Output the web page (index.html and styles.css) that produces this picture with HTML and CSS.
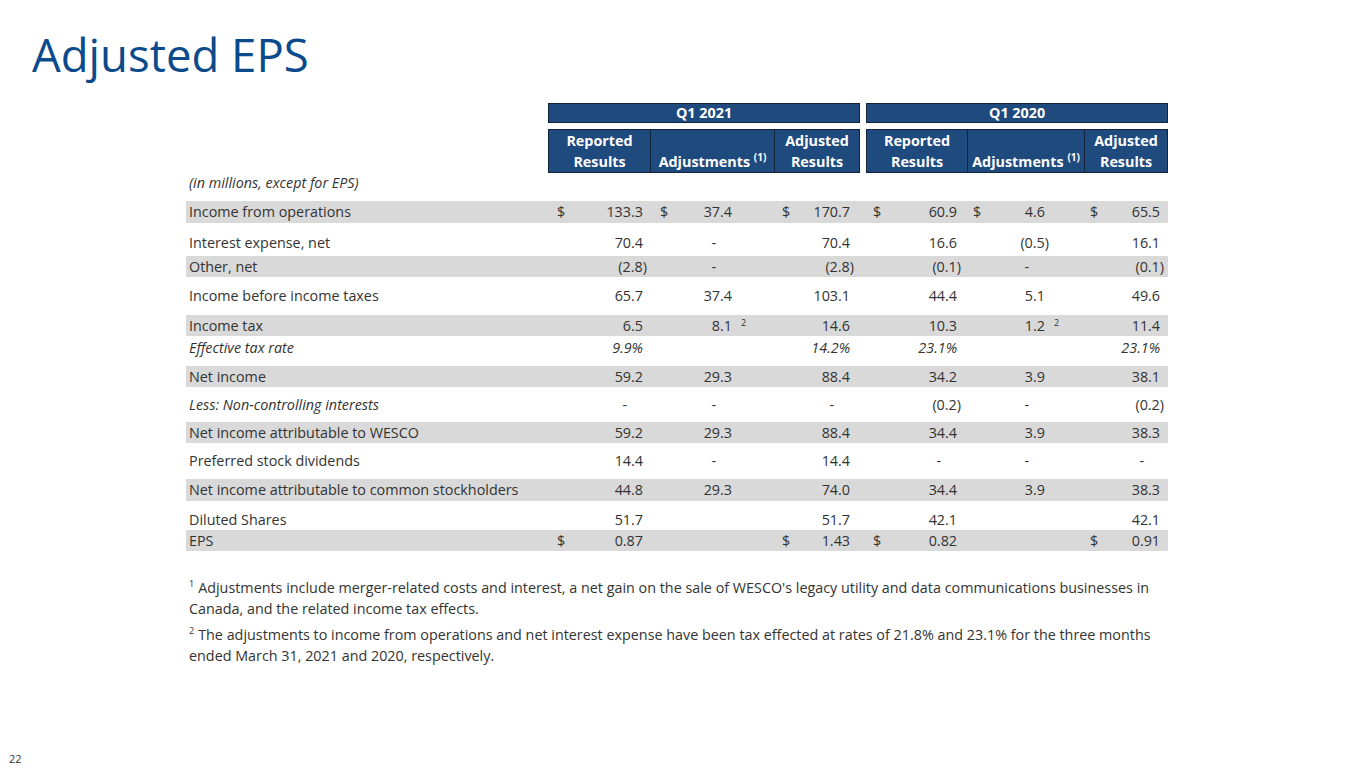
FILE: index.html
```html
<!DOCTYPE html>
<html lang="en">
<head>
<meta charset="utf-8">
<title>Adjusted EPS</title>
<link rel="stylesheet" href="styles.css">
</head>
<body>
<div class="slide">
  <h1 class="title">Adjusted EPS</h1>
  <div class="content">
    <table class="fin">
      <colgroup>
        <col class="w-label"><col class="w-c1"><col class="w-c2v"><col class="w-c2n"><col class="w-c3"><col class="w-gap"><col class="w-c4"><col class="w-c5v"><col class="w-c5n"><col class="w-c6">
      </colgroup>
      <thead>
        <tr class="period">
          <th></th>
          <th colspan="4" class="q">Q1 2021</th>
          <th></th>
          <th colspan="4" class="q">Q1 2020</th>
        </tr>
        <tr class="hgap"><th colspan="10"></th></tr>
        <tr class="sub">
          <th></th>
          <th class="h first">Reported<br>Results</th>
          <th class="h" colspan="2">Adjustments <sup class="hs">(1)</sup></th>
          <th class="h last">Adjusted<br>Results</th>
          <th></th>
          <th class="h first">Reported<br>Results</th>
          <th class="h" colspan="2">Adjustments <sup class="hs">(1)</sup></th>
          <th class="h last">Adjusted<br>Results</th>
        </tr>
      </thead>
      <tbody>
        <tr class="r-units">
          <td class="label it">(in millions, except for EPS)</td>
          <td></td><td></td><td></td><td></td><td></td><td></td><td></td><td></td><td></td>
        </tr>
        <tr class="g h22">
          <td class="label">Income from operations</td>
          <td class="n c1"><span class="cur">$</span>133.3</td>
          <td class="n c2"><span class="cur">$</span>37.4</td><td></td>
          <td class="n c3"><span class="cur">$</span>170.7</td>
          <td></td>
          <td class="n c4"><span class="cur">$</span>60.9</td>
          <td class="n c5"><span class="cur">$</span>4.6</td><td></td>
          <td class="n c6"><span class="cur">$</span>65.5</td>
        </tr>
        <tr class="r-b33">
          <td class="label">Interest expense, net</td>
          <td class="n c1">70.4</td>
          <td class="n c2"><span class="z">-</span></td><td></td>
          <td class="n c3">70.4</td>
          <td></td>
          <td class="n c4">16.6</td>
          <td class="n c5"><span class="neg">(0.5)</span></td><td></td>
          <td class="n c6">16.1</td>
        </tr>
        <tr class="g h21">
          <td class="label">Other, net</td>
          <td class="n c1"><span class="neg">(2.8)</span></td>
          <td class="n c2"><span class="z">-</span></td><td></td>
          <td class="n c3"><span class="neg">(2.8)</span></td>
          <td></td>
          <td class="n c4"><span class="neg">(0.1)</span></td>
          <td class="n c5"><span class="z">-</span></td><td></td>
          <td class="n c6"><span class="neg">(0.1)</span></td>
        </tr>
        <tr class="r-m38">
          <td class="label">Income before income taxes</td>
          <td class="n c1">65.7</td>
          <td class="n c2">37.4</td><td></td>
          <td class="n c3">103.1</td>
          <td></td>
          <td class="n c4">44.4</td>
          <td class="n c5">5.1</td><td></td>
          <td class="n c6">49.6</td>
        </tr>
        <tr class="g h21">
          <td class="label">Income tax</td>
          <td class="n c1">6.5</td>
          <td class="n c2">8.1</td><td class="note"><sup class="ns">2</sup></td>
          <td class="n c3">14.6</td>
          <td></td>
          <td class="n c4">10.3</td>
          <td class="n c5">1.2</td><td class="note"><sup class="ns">2</sup></td>
          <td class="n c6">11.4</td>
        </tr>
        <tr class="r-t30 it">
          <td class="label">Effective tax rate</td>
          <td class="n c1">9.9%</td>
          <td class="n c2"></td><td></td>
          <td class="n c3">14.2%</td>
          <td></td>
          <td class="n c4">23.1%</td>
          <td class="n c5"></td><td></td>
          <td class="n c6">23.1%</td>
        </tr>
        <tr class="g h21">
          <td class="label">Net income</td>
          <td class="n c1">59.2</td>
          <td class="n c2">29.3</td><td></td>
          <td class="n c3">88.4</td>
          <td></td>
          <td class="n c4">34.2</td>
          <td class="n c5">3.9</td><td></td>
          <td class="n c6">38.1</td>
        </tr>
        <tr class="r-m35">
          <td class="label it">Less: Non-controlling interests</td>
          <td class="n c1"><span class="z">-</span></td>
          <td class="n c2"><span class="z">-</span></td><td></td>
          <td class="n c3"><span class="z">-</span></td>
          <td></td>
          <td class="n c4"><span class="neg">(0.2)</span></td>
          <td class="n c5"><span class="z">-</span></td><td></td>
          <td class="n c6"><span class="neg">(0.2)</span></td>
        </tr>
        <tr class="g h21">
          <td class="label">Net income attributable to WESCO</td>
          <td class="n c1">59.2</td>
          <td class="n c2">29.3</td><td></td>
          <td class="n c3">88.4</td>
          <td></td>
          <td class="n c4">34.4</td>
          <td class="n c5">3.9</td><td></td>
          <td class="n c6">38.3</td>
        </tr>
        <tr class="r-m36">
          <td class="label">Preferred stock dividends</td>
          <td class="n c1">14.4</td>
          <td class="n c2"><span class="z">-</span></td><td></td>
          <td class="n c3">14.4</td>
          <td></td>
          <td class="n c4"><span class="z">-</span></td>
          <td class="n c5"><span class="z">-</span></td><td></td>
          <td class="n c6"><span class="z">-</span></td>
        </tr>
        <tr class="g h22">
          <td class="label">Net income attributable to common stockholders</td>
          <td class="n c1">44.8</td>
          <td class="n c2">29.3</td><td></td>
          <td class="n c3">74.0</td>
          <td></td>
          <td class="n c4">34.4</td>
          <td class="n c5">3.9</td><td></td>
          <td class="n c6">38.3</td>
        </tr>
        <tr class="r-b29">
          <td class="label">Diluted Shares</td>
          <td class="n c1">51.7</td>
          <td class="n c2"></td><td></td>
          <td class="n c3">51.7</td>
          <td></td>
          <td class="n c4">42.1</td>
          <td class="n c5"></td><td></td>
          <td class="n c6">42.1</td>
        </tr>
        <tr class="g h21">
          <td class="label">EPS</td>
          <td class="n c1"><span class="cur">$</span>0.87</td>
          <td class="n c2"></td><td></td>
          <td class="n c3"><span class="cur">$</span>1.43</td>
          <td></td>
          <td class="n c4"><span class="cur">$</span>0.82</td>
          <td class="n c5"></td><td></td>
          <td class="n c6"><span class="cur">$</span>0.91</td>
        </tr>
      </tbody>
    </table>
    <div class="notes">
      <p class="note-p"><span class="fs">1</span>Adjustments include merger-related costs and interest, a net gain on the sale of WESCO's legacy utility and data communications businesses in<br>Canada, and the related income tax effects.</p>
      <p class="note-p"><span class="fs">2</span>The adjustments to income from operations and net interest expense have been tax effected at rates of 21.8% and 23.1% for the three months<br>ended March 31, 2021 and 2020, respectively.</p>
    </div>
  </div>
  <div class="page-num">22</div>
</div>
</body>
</html>
```

FILE: styles.css
```css
* { box-sizing: border-box; }

html, body {
  margin: 0;
  padding: 0;
  background: #ffffff;
}

body {
  font-family: "Open Sans", "Liberation Sans", sans-serif;
  color: #333333;
}

.slide {
  width: 1365px;
  height: 768px;
  display: flex;
  flex-direction: column;
  overflow: hidden;
}

.title {
  margin: 0;
  padding: 24px 0 0 32px;
  font-size: 45.5px;
  font-weight: 400;
  line-height: 60px;
  color: #0b4a8b;
}

.content {
  padding-left: 186px;
  margin-top: 19px;
}

/* ---------- table ---------- */
.fin {
  width: 982px;
  table-layout: fixed;
  border-collapse: separate;
  border-spacing: 0;
  font-size: 14.35px;
  line-height: 20px;
}

.w-label { width: 362px; }
.w-c1 { width: 102px; }
.w-c2v { width: 86px; }
.w-c2n { width: 38px; }
.w-c3 { width: 86px; }
.w-gap { width: 6px; }
.w-c4 { width: 101px; }
.w-c5v { width: 82px; }
.w-c5n { width: 35px; }
.w-c6 { width: 84px; }

.fin th, .fin td {
  padding: 0;
  white-space: nowrap;
}

.period { height: 20px; }
.period .q {
  background: #1f4a7e;
  border: 1px solid #13243b;
  color: #ffffff;
  font-weight: 700;
  text-align: center;
  line-height: 18px;
}

.hgap { height: 6px; }

.sub { height: 42px; }
.sub .h {
  background: #1f4a7e;
  color: #ffffff;
  font-weight: 700;
  text-align: center;
  vertical-align: bottom;
  line-height: 21px;
  border-top: 1px solid #13243b;
  border-bottom: 1px solid #13243b;
  border-left: 1px solid #13243b;
  padding-bottom: 0;
}
.sub .h.last { border-right: 1px solid #13243b; }

.hs {
  display: inline-block;
  font-size: 10px;
  line-height: 10px;
  vertical-align: 6px;
}

/* body rows */
.g { background: #d9d9d9; }
.g td { vertical-align: middle; }
.h22 { height: 22px; }
.h21 { height: 21px; }

.r-units { height: 28px; }
.r-units td { vertical-align: top; }

.r-b33 { height: 33px; }
.r-b33 td { vertical-align: bottom; padding-bottom: 3px; }

.r-m38 { height: 38px; }
.r-m38 td { vertical-align: middle; }

.r-t30 { height: 30px; }
.r-t30 td { vertical-align: top; padding-top: 2px; }

.r-m35 { height: 35px; }
.r-m35 td { vertical-align: middle; }

.r-m36 { height: 36px; }
.r-m36 td { vertical-align: middle; }

.r-b29 { height: 29px; }
.r-b29 td { vertical-align: bottom; }

.it { font-style: italic; }

.label {
  padding-left: 3px !important;
  text-align: left;
}

.n { text-align: right; }
.cur { float: left; }

.c1 { padding-right: 7px !important; padding-left: 9px !important; }
.c2 { padding-right: 4px !important; padding-left: 10px !important; }
.c3 { padding-right: 10px !important; padding-left: 8px !important; }
.c4 { padding-right: 10px !important; padding-left: 7px !important; }
.c5 { padding-right: 4px !important; padding-left: 6px !important; }
.c6 { padding-right: 8px !important; padding-left: 6px !important; }

.neg { margin-right: -4px; }
.z { padding-right: 16px; }

.note {
  text-align: left;
  padding-left: 5px !important;
}
.ns {
  display: inline-block;
  font-size: 9px;
  line-height: 9px;
  vertical-align: 5px;
}

/* ---------- notes ---------- */
.notes {
  width: 982px;
  margin-top: 26px;
  font-size: 14.35px;
  line-height: 21px;
}
.notes p {
  margin: 0 0 5px 3px;
}
.fs {
  display: inline-block;
  font-size: 9px;
  line-height: 9px;
  vertical-align: 6px;
  margin-right: 4px;
}

.page-num {
  margin-top: auto;
  padding: 0 0 2px 9px;
  font-size: 11px;
  line-height: 14px;
  color: #333333;
}
```
